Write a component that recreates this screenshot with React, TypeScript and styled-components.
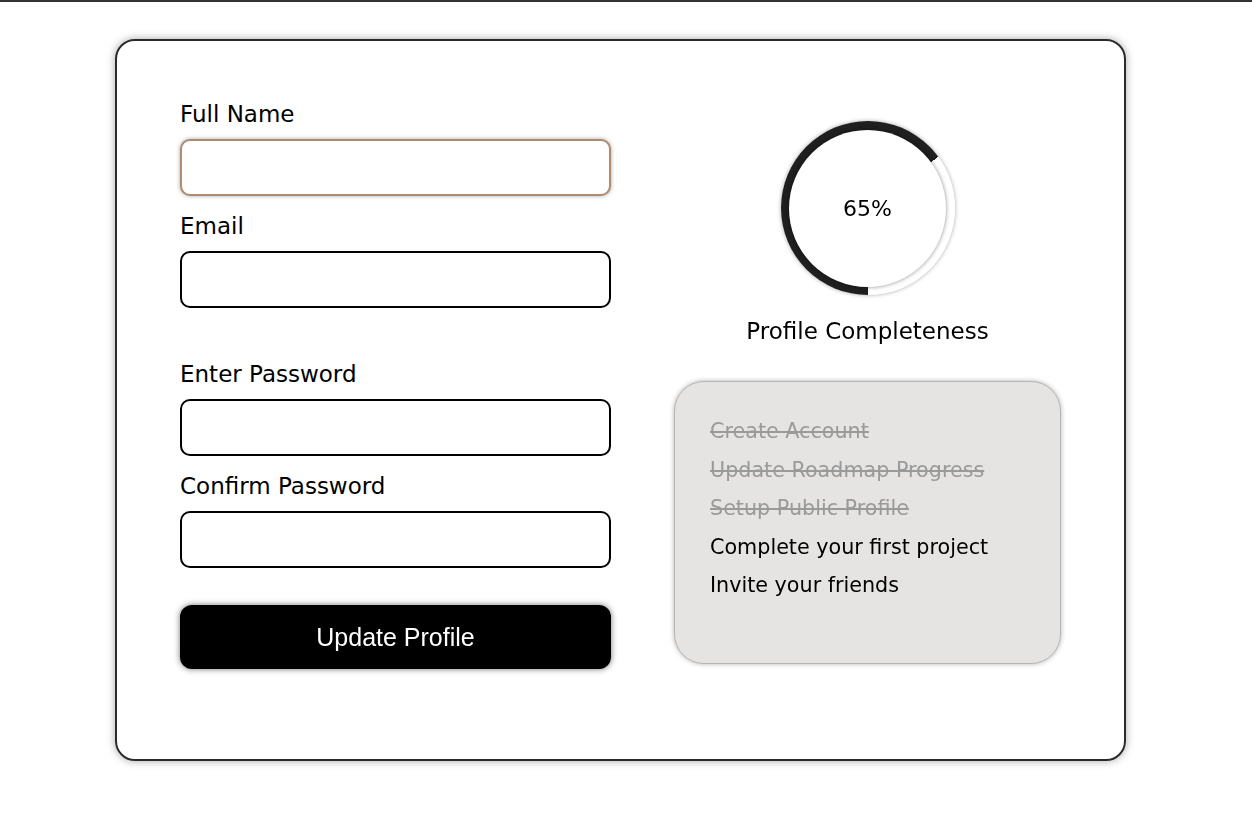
import React from "react";
import styled, { createGlobalStyle } from "styled-components";

const Global = createGlobalStyle`
  html, body { margin: 0; padding: 0; background: #fff; }
  body {
    border-top: 2px solid #333;
    font-family: "Comic Sans MS", "DejaVu Sans", sans-serif;
    color: #000;
  }
  * { box-sizing: border-box; }
`;

const Page = styled.main`
  padding: 37px 0 40px 115px;
`;

const Card = styled.section`
  width: 1011px;
  height: 722px;
  border: 2px solid #2b2b2b;
  border-radius: 20px;
  box-shadow: 0 0 8px rgba(0, 0, 0, 0.35);
  padding: 56px 63px;
  display: grid;
  grid-template-columns: 431px 1fr;
  column-gap: 63px;
`;

const Form = styled.form`
  display: flex;
  flex-direction: column;
`;

const Group = styled.div<{ $last?: boolean }>`
  display: flex;
  flex-direction: column;
  gap: 13px;
  margin-bottom: ${(p) => (p.$last ? "37px" : "49px")};
`;

const Field = styled.label`
  display: flex;
  flex-direction: column;
  gap: 12px;
`;

const LabelText = styled.span`
  font-size: 23px;
  line-height: 30px;
  height: 30px;
  padding-top: 2px;
`;

const Input = styled.input<{ $active?: boolean }>`
  width: 100%;
  height: 57px;
  border: 2px solid ${(p) => (p.$active ? "#b08a6e" : "#000")};
  border-radius: 10px;
  background: #fff;
  padding: 0 10px;
  font-size: 20px;
  font-family: inherit;
  outline: none;
  box-shadow: ${(p) => (p.$active ? "0 0 4px rgba(0,0,0,0.35)" : "none")};
  caret-color: #000;
`;

const Button = styled.button`
  width: 100%;
  height: 64px;
  border: none;
  border-radius: 12px;
  background: #000;
  color: #fff;
  font-family: "Liberation Sans", Arial, sans-serif;
  font-size: 25px;
  box-shadow: 0 0 6px rgba(0, 0, 0, 0.55);
  cursor: pointer;
`;

const Side = styled.div`
  display: flex;
  flex-direction: column;
  align-items: center;
  padding-top: 24px;
`;

const Ring = styled.div<{ $pct: number }>`
  width: 174px;
  height: 174px;
  border-radius: 50%;
  background: conic-gradient(from 180deg, #1f1f1f 0 ${(p) => p.$pct}%, #fff ${(p) => p.$pct}% 100%);
  box-shadow: 0 0 4px rgba(0, 0, 0, 0.35);
  display: flex;
  align-items: center;
  justify-content: center;
`;

const RingInner = styled.div`
  width: 157px;
  height: 157px;
  border-radius: 50%;
  background: #fff;
  box-shadow: 0 0 4px rgba(0, 0, 0, 0.45);
  display: flex;
  align-items: center;
  justify-content: center;
  font-size: 22px;
`;

const Caption = styled.div`
  margin-top: 21px;
  font-size: 23px;
  line-height: 30px;
`;

const Checklist = styled.ul`
  list-style: none;
  margin: 35px 0 0;
  width: 387px;
  height: 283px;
  padding: 30px 12px 0 35px;
  background: #e5e4e2;
  border: 1px solid #b5b5b5;
  border-radius: 30px;
  box-shadow: 0 0 5px rgba(0, 0, 0, 0.3);
`;

const Item = styled.li<{ $done?: boolean }>`
  font-size: 20.7px;
  line-height: 38.5px;
  white-space: nowrap;
  color: ${(p) => (p.$done ? "#9a9a9a" : "#000")};
  text-decoration: ${(p) => (p.$done ? "line-through" : "none")};
`;

const tasks = [
  { label: "Create Account", done: true },
  { label: "Update Roadmap Progress", done: true },
  { label: "Setup Public Profile", done: true },
  { label: "Complete your first project", done: false },
  { label: "Invite your friends", done: false },
];

export default function App() {
  return (
    <>
      <Global />
      <Page>
        <Card>
          <Form onSubmit={(e) => e.preventDefault()}>
            <Group>
              <Field>
                <LabelText>Full Name</LabelText>
                <Input type="text" autoFocus $active />
              </Field>
              <Field>
                <LabelText>Email</LabelText>
                <Input type="email" />
              </Field>
            </Group>
            <Group $last>
              <Field>
                <LabelText>Enter Password</LabelText>
                <Input type="password" />
              </Field>
              <Field>
                <LabelText>Confirm Password</LabelText>
                <Input type="password" />
              </Field>
            </Group>
            <Button type="submit">Update Profile</Button>
          </Form>
          <Side>
            <Ring $pct={65}>
              <RingInner>65%</RingInner>
            </Ring>
            <Caption>Profile Completeness</Caption>
            <Checklist>
              {tasks.map((t) => (
                <Item key={t.label} $done={t.done}>
                  {t.label}
                </Item>
              ))}
            </Checklist>
          </Side>
        </Card>
      </Page>
    </>
  );
}
